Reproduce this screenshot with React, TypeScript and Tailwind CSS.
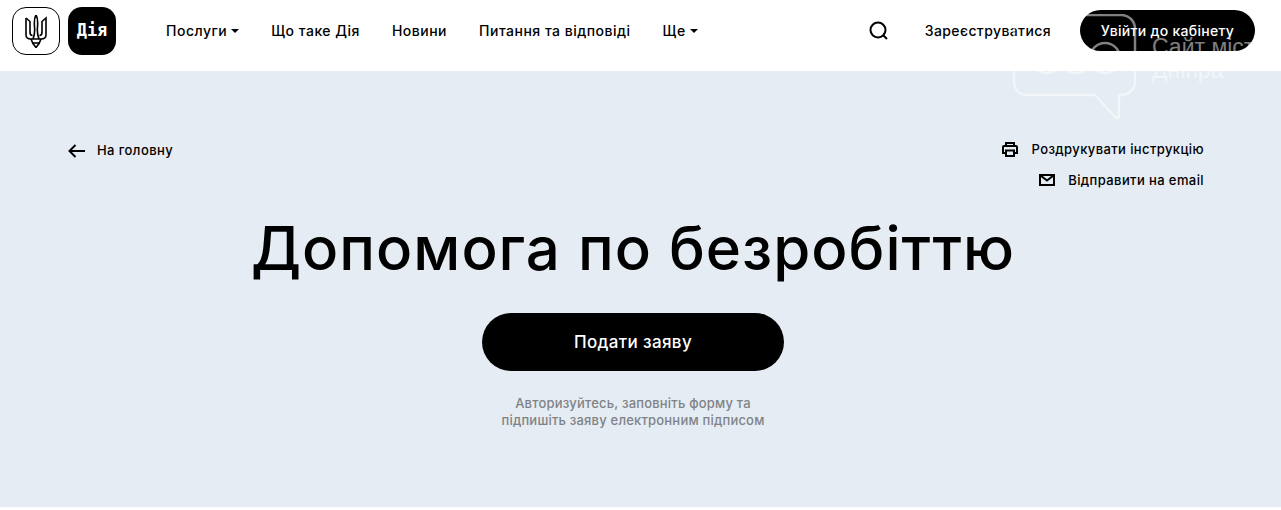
const navItems = [
  { label: 'Послуги', caret: true },
  { label: 'Що таке Дія', caret: false },
  { label: 'Новини', caret: false },
  { label: 'Питання та відповіді', caret: false },
  { label: 'Ще', caret: true },
];

function Trident() {
  return (
    <svg width="22" height="33" viewBox="0 0 22 33" fill="none" stroke="#000" strokeWidth="1.6">
      <path d="M11 0C9 3 9 6 9.500 12C10 16 9.500 20 8 24" />
      <path d="M11 0C13 3 13 6 12.500 12C12 16 12.500 20 14 24" />
      <path d="M1 3V20C1 22.500 3 24 6 24H16C19 24 21 22.500 21 20V3L17 6.500V17C17 19 16 20.500 14.500 20.500" />
      <path d="M1 3L5 6.500V17C5 19 6 20.500 7.500 20.500" />
      <path d="M6 24C7 27.500 9 30.500 11 32.500C13 30.500 15 27.500 16 24" />
      <path d="M7.500 28H14.500" />
    </svg>
  );
}

function SearchIcon() {
  return (
    <svg width="19" height="19" viewBox="0 0 19 19" fill="none" stroke="#000" strokeWidth="2">
      <circle cx="9" cy="9" r="7.500" />
      <path d="M14.500 14.500L18 18" />
    </svg>
  );
}

function ArrowIcon() {
  return (
    <svg width="17" height="14" viewBox="0 0 17 14" fill="none" stroke="#000" strokeWidth="2">
      <path d="M17 7H1.500M7.500 1L1.500 7L7.500 13" />
    </svg>
  );
}

function PrinterIcon() {
  return (
    <svg width="16" height="15" viewBox="0 0 16 15" fill="none" stroke="#000" strokeWidth="2">
      <path d="M4 4V1H12V4" />
      <path d="M4 11H1V5C1 4.500 1.500 4 2 4H14C14.500 4 15 4.500 15 5V11H12" />
      <path d="M4 8.500H12V14H4Z" />
    </svg>
  );
}

function MailIcon() {
  return (
    <svg width="16" height="12" viewBox="0 0 16 12" fill="none" stroke="#000" strokeWidth="2">
      <path d="M1 1H15V11H1Z" />
      <path d="M1.500 1.500L8 6.500L14.500 1.500" />
    </svg>
  );
}

function Watermark() {
  return (
    <div className="pointer-events-none absolute top-[14px] left-[1013px] flex gap-[14px] text-white/50">
      <svg width="125" height="106" viewBox="0 0 125 106" fill="none" stroke="currentColor" strokeWidth="2.500" strokeLinejoin="round">
        <path d="M14 1H108C116 1 122 7 122 15V67C122 75 116 81 108 81H106V102C106 104 104 105 102 103L82 81H14C6 81 1 75 1 67V15C1 6 6 1 14 1Z" />
        <circle cx="34" cy="44" r="15" />
        <circle cx="63" cy="44" r="15" />
        <circle cx="92" cy="44" r="15" />
      </svg>
      <div className="pt-[22px] font-['Liberation_Sans',sans-serif] text-[23px] leading-[23px] font-light whitespace-nowrap">
        <div>Сайт міст</div>
        <div>Дніпра</div>
      </div>
    </div>
  );
}

export default function App() {
  return (
    <div className="relative h-[510px] overflow-hidden bg-white font-['Inter',sans-serif] text-black">
      {/* Header */}
      <header className="flex h-[71px] items-center pr-[26px] pb-[10px] pl-[12px]">
        <div className="mt-[1px] flex items-center gap-[8px]">
          <div className="flex h-[48px] w-[48px] items-center justify-center rounded-[14px] border border-black">
            <Trident />
          </div>
          <div className="flex h-[48px] w-[48px] items-center justify-center rounded-[14px] bg-black pb-[1px] font-['DejaVu_Sans_Mono',monospace] text-[17px] font-bold text-white">
            Дія
          </div>
        </div>
        <nav className="ml-[50px] flex items-center gap-[32px] text-[14px] font-medium tracking-[0.5px]">
          {navItems.map((item) => (
            <a key={item.label} className="flex items-center gap-[4px] whitespace-nowrap">
              {item.label}
              {item.caret && <span className="mt-[1px] h-0 w-0 border-x-[4px] border-t-[4px] border-x-transparent border-t-black" />}
            </a>
          ))}
        </nav>
        <div className="ml-auto flex items-center">
          <SearchIcon />
          <a className="ml-[37px] text-[14px] font-medium tracking-[0.4px] whitespace-nowrap">Зареєструватися</a>
          <button className="ml-[29px] h-[41px] w-[175px] rounded-[21px] bg-black text-[14px] font-medium tracking-[0.3px] whitespace-nowrap text-white">
            Увійти до кабінету
          </button>
        </div>
      </header>

      {/* Main */}
      <main className="h-[436px] bg-[#e5ecf3] px-[68px] pt-[69px]">
        <div className="flex items-start justify-between pr-[9px]">
          <a className="mt-[1px] flex items-center gap-[12px] text-[13px] font-medium tracking-[0.4px]">
            <ArrowIcon />
            На головну
          </a>
          <div className="flex flex-col items-end gap-[11px] text-[13px] font-medium tracking-[0.4px]">
            <a className="flex items-center gap-[13px]">
              <PrinterIcon />
              Роздрукувати інструкцію
            </a>
            <a className="flex items-center gap-[13px]">
              <MailIcon />
              Відправити на email
            </a>
          </div>
        </div>
        <div className="mr-[15px]">
          <h1 className="mt-[18px] text-center text-[60px] leading-[80px] font-[530] tracking-[1px]">Допомога по безробіттю</h1>
          <div className="mt-[25px] flex justify-center">
            <button className="h-[58px] w-[302px] rounded-[29px] bg-black pt-[2px] text-[17px] font-medium tracking-[0.35px] text-white">Подати заяву</button>
          </div>
          <p className="mt-[24px] text-center text-[13px] leading-[17px] font-medium tracking-[0.2px] text-[#7f8387]">
            Авторизуйтесь, заповніть форму та
            <br />
            підпишіть заяву електронним підписом
          </p>
        </div>
      </main>

      <Watermark />
    </div>
  );
}
